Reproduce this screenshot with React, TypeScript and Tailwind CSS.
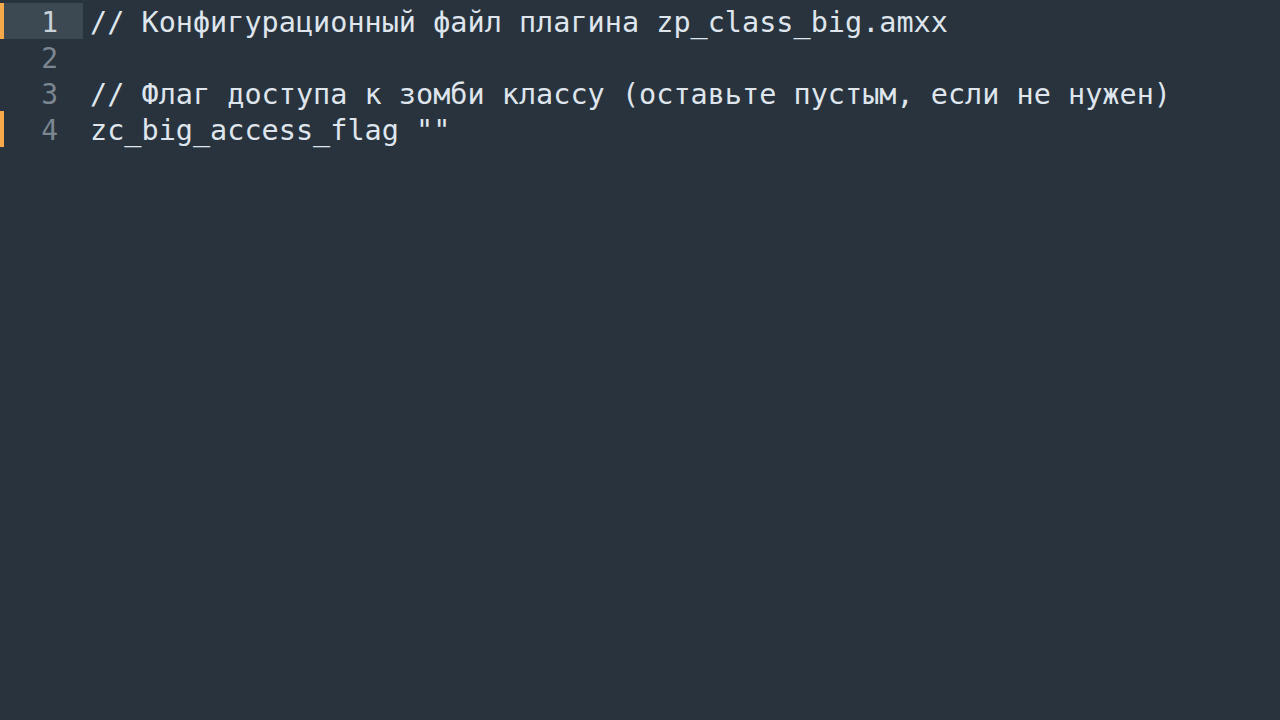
import React from "react";

type Line = {
  text: string;
  modified?: boolean;
  active?: boolean;
};

const lines: Line[] = [
  { text: "// Конфигурационный файл плагина zp_class_big.amxx", modified: true, active: true },
  { text: "" },
  { text: "// Флаг доступа к зомби классу (оставьте пустым, если не нужен)" },
  { text: 'zc_big_access_flag ""', modified: true },
];

const App: React.FC = () => {
  return (
    <div
      className="w-[1280px] h-[720px] bg-[#28333e] pt-[3px] overflow-hidden"
      style={{ fontFamily: '"DejaVu Sans Mono", "Liberation Mono", monospace' }}
    >
      {lines.map((line, i) => (
        <div key={i} className="flex h-[36px] items-center">
          {/* Gutter */}
          <div className="flex h-full w-[83px] shrink-0">
            <div className={`w-[4px] h-full ${line.modified ? "bg-[#f5a94a]" : ""}`} />
            <div
              className={`flex-1 h-full flex items-center justify-end pr-[25px] pt-[4px] text-[28px] ${
                line.active ? "bg-[#3c4852] text-[#c9d1d9]" : "text-[#7b8690]"
              }`}
            >
              {i + 1}
            </div>
          </div>
          {/* Code */}
          <div className="pl-[7px] pt-[4px] text-[28.5px] text-[#dfe5ec] whitespace-pre leading-none">
            {line.text}
          </div>
        </div>
      ))}
    </div>
  );
};

export default App;
